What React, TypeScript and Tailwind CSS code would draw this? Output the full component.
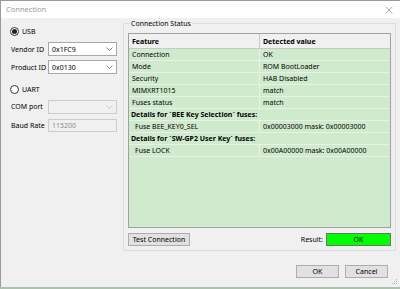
import React from "react";

const font = { fontFamily: '"Noto Sans", "Open Sans", sans-serif' };

function Radio({ checked }: { checked: boolean }) {
  return (
    <span className="w-[9px] h-[9px] rounded-full border border-[#333] bg-white flex items-center justify-center shrink-0">
      {checked && <span className="w-[5px] h-[5px] rounded-full bg-[#222]" />}
    </span>
  );
}

function Combo({ value, disabled }: { value?: string; disabled?: boolean }) {
  return (
    <div
      className={`w-[69px] h-[14px] border flex items-center justify-between pl-[3px] pr-[3px] ${
        disabled ? "border-[#cccccc] bg-[#f0f0f0]" : "border-[#a8a8a8] bg-white"
      }`}
    >
      <span className="text-[7px] leading-none text-black">{value}</span>
      <svg width="7" height="4" viewBox="0 0 7 4">
        <path d="M0.5 0.5 L3.5 3.5 L6.5 0.5" fill="none" stroke={disabled ? "#c0c0c0" : "#666"} strokeWidth="0.8" />
      </svg>
    </div>
  );
}

const rows: { a: string; b?: string; kind: "row" | "detail" | "fuse" }[] = [
  { a: "Connection", b: "OK", kind: "row" },
  { a: "Mode", b: "ROM BootLoader", kind: "row" },
  { a: "Security", b: "HAB Disabled", kind: "row" },
  { a: "MIMXRT1015", b: "match", kind: "row" },
  { a: "Fuses status", b: "match", kind: "row" },
  { a: "Details for `BEE Key Selection` fuses:", kind: "detail" },
  { a: "Fuse BEE_KEY0_SEL", b: "0x00003000 mask: 0x00003000", kind: "fuse" },
  { a: "Details for `SW-GP2 User Key` fuses:", kind: "detail" },
  { a: "Fuse LOCK", b: "0x00A00000 mask: 0x00A00000", kind: "fuse" },
];

export default function App() {
  return (
    <div className="w-[400px] h-[289px] flex flex-col bg-[#a9c4a6] overflow-hidden text-black whitespace-nowrap" style={font}>
      <div className="flex-1 flex flex-col border-l border-t border-[#9a9a9a] bg-[#f0f0f0] mb-[2px]">
        {/* Title bar */}
        <div className="h-[17px] bg-white flex items-center justify-between pl-[5px] pr-[7px] shrink-0">
          <span className="text-[7.5px] text-[#9a9a9a] leading-none">Connection</span>
          <svg width="8" height="8" viewBox="0 0 8 8">
            <path d="M0.5 0.5 L7.5 7.5 M7.5 0.5 L0.5 7.5" stroke="#a0a0a0" strokeWidth="0.8" />
          </svg>
        </div>
        {/* Body */}
        <div className="flex-1 flex flex-col">
          <div className="flex">
            {/* Left panel */}
            <div className="w-[122px] shrink-0 flex flex-col pl-[9px] pt-[9px] text-[7px] leading-none">
              <div className="h-[9px] flex items-center gap-[3px]">
                <Radio checked />
                <span>USB</span>
              </div>
              <div className="h-[14px] mt-[6px] flex items-center">
                <span className="w-[38px] pl-[1px]">Vendor ID</span>
                <Combo value="0x1FC9" />
              </div>
              <div className="h-[14px] mt-[4px] flex items-center">
                <span className="w-[38px] pl-[1px]">Product ID</span>
                <Combo value="0x0130" />
              </div>
              <div className="h-[9px] mt-[11px] flex items-center gap-[3px]">
                <Radio checked={false} />
                <span>UART</span>
              </div>
              <div className="h-[13px] mt-[6px] flex items-center">
                <span className="w-[38px] pl-[1px]">COM port</span>
                <Combo disabled />
              </div>
              <div className="h-[13px] mt-[6px] flex items-center">
                <span className="w-[38px] pl-[1px]">Baud Rate</span>
                <div className="w-[69px] h-[13px] border border-[#cccccc] bg-[#f0f0f0] flex items-center pl-[3px]">
                  <span className="text-[7px] text-[#8a8a8a]">115200</span>
                </div>
              </div>
            </div>
            {/* Group box */}
            <fieldset className="w-[273px] h-[231px] mt-[2px] border border-[#dcdcdc] rounded-[1px] px-[4px] pb-[4px] flex flex-col">
              <legend className="text-[7px] leading-none px-[1px] ml-[2px]">Connection Status</legend>
              <div className="mt-[6px] h-[195px] border border-[#a0a0a0] bg-[#d0eacd] flex flex-col text-[7px] leading-none">
                <div className="h-[15px] bg-[#f0f0f0] flex font-bold border-b border-[#c8c8c8]">
                  <div className="w-[131px] border-r border-[#c8c8c8] flex items-center pl-[3px]">Feature</div>
                  <div className="flex-1 flex items-center pl-[3px]">Detected value</div>
                </div>
                {rows.map((r, i) =>
                  r.kind === "detail" ? (
                    <div key={i} className="h-[12px] flex items-center pl-[2px] font-bold border-b border-[#e6f3e4]">
                      {r.a}
                    </div>
                  ) : (
                    <div key={i} className="h-[12px] flex border-b border-[#e6f3e4]">
                      <div
                        className={`w-[131px] border-r border-[#e6f3e4] flex items-center ${
                          r.kind === "fuse" ? "pl-[6px]" : "pl-[3px]"
                        }`}
                      >
                        {r.a}
                      </div>
                      <div className="flex-1 flex items-center pl-[3px]">{r.b}</div>
                    </div>
                  )
                )}
              </div>
              <div className="mt-[5px] flex items-center justify-between">
                <button className="w-[62px] h-[13px] border border-[#adadad] bg-[#e1e1e1] text-[7px] leading-none flex items-center justify-center">
                  Test Connection
                </button>
                <div className="flex items-center gap-[3px]">
                  <span className="text-[7px] leading-none">Result:</span>
                  <div className="w-[65px] h-[13px] border border-[#707070] bg-[#00ff00] flex items-center justify-center text-[7px] leading-none">
                    OK
                  </div>
                </div>
              </div>
            </fieldset>
          </div>
          {/* Bottom buttons */}
          <div className="flex justify-end gap-[6px] pr-[12px] mt-[14px]">
            <button className="w-[43px] h-[13px] border border-[#adadad] bg-[#e1e1e1] text-[7px] leading-none flex items-center justify-center">
              OK
            </button>
            <button className="w-[43px] h-[13px] border border-[#adadad] bg-[#e1e1e1] text-[7px] leading-none flex items-center justify-center">
              Cancel
            </button>
          </div>
          <div className="flex-1 flex items-end justify-end pr-[2px] pb-[2px]">
            <svg width="6" height="6" viewBox="0 0 6 6">
              <rect x="4" y="0" width="1" height="1" fill="#b0b0b0" />
              <rect x="2" y="2" width="1" height="1" fill="#b0b0b0" />
              <rect x="4" y="2" width="1" height="1" fill="#b0b0b0" />
              <rect x="0" y="4" width="1" height="1" fill="#b0b0b0" />
              <rect x="2" y="4" width="1" height="1" fill="#b0b0b0" />
              <rect x="4" y="4" width="1" height="1" fill="#b0b0b0" />
            </svg>
          </div>
        </div>
      </div>
    </div>
  );
}
